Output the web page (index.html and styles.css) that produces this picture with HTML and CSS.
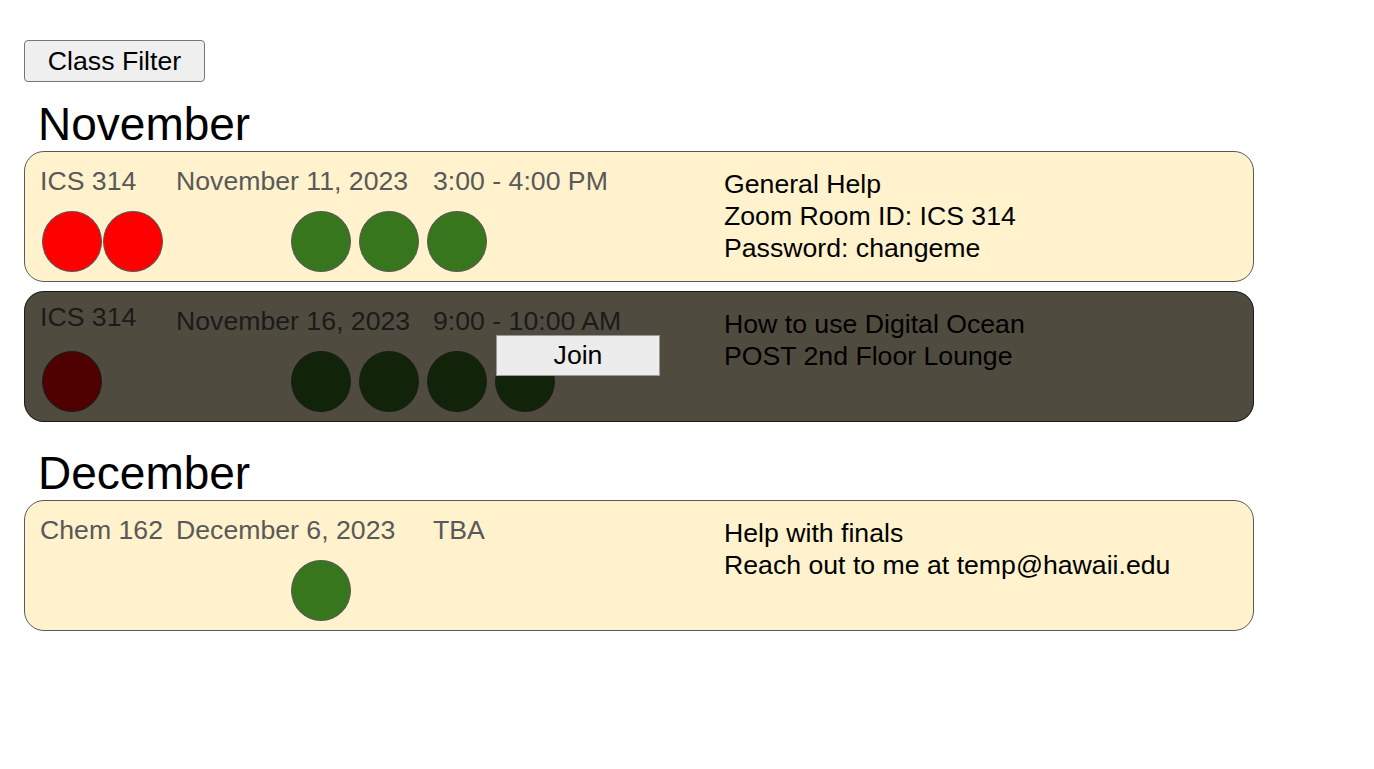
FILE: index.html
```html
<!DOCTYPE html>
<html lang="en">

<head>
    <meta charset="UTF-8">
    <meta name="viewport" content="width=device-width, initial-scale=1.0">
    <title>Office Hours</title>
    <link rel="stylesheet" href="styles.css">
</head>

<body>
    <div id="page">
        <button class="filter">Class Filter</button>

        <h2 class="month">November</h2>
        <div class="slot">
            <div class="main">
                <div class="meta">
                    <span class="course">ICS 314</span>
                    <span>November 11, 2023</span>
                    <span>3:00 - 4:00 PM</span>
                </div>
                <div class="people">
                    <div class="group away">
                        <i class="dot red"></i><i class="dot red"></i>
                    </div>
                    <div class="group here">
                        <i class="dot green"></i><i class="dot green"></i><i class="dot green"></i>
                    </div>
                </div>
            </div>
            <div class="info">
                General Help<br>
                Zoom Room ID: ICS 314<br>
                Password: changeme
            </div>
        </div>

        <div class="slot dim">
            <div class="main">
                <div class="meta">
                    <span class="course">ICS 314</span>
                    <span>November 16, 2023</span>
                    <span>9:00 - 10:00 AM</span>
                </div>
                <div class="people">
                    <div class="group away">
                        <i class="dot red"></i>
                    </div>
                    <div class="group here">
                        <i class="dot green"></i><i class="dot green"></i><i class="dot green"></i><i class="dot green"></i>
                    </div>
                </div>
            </div>
            <div class="info">
                How to use Digital Ocean<br>
                POST 2nd Floor Lounge
            </div>
            <button class="join">Join</button>
        </div>

        <h2 class="month">December</h2>
        <div class="slot">
            <div class="main">
                <div class="meta">
                    <span class="course">Chem 162</span>
                    <span>December 6, 2023</span>
                    <span>TBA</span>
                </div>
                <div class="people">
                    <div class="group away"></div>
                    <div class="group here">
                        <i class="dot green"></i>
                    </div>
                </div>
            </div>
            <div class="info">
                Help with finals<br>
                Reach out to me at temp@hawaii.edu
            </div>
        </div>
    </div>
</body>

</html>
```

FILE: styles.css
```css
* {
    margin: 0;
    padding: 0;
    box-sizing: border-box;
}

body {
    background: #fff;
    font-family: "Liberation Sans", Arial, sans-serif;
    font-size: 20pt;
    color: #000;
}

#page {
    width: 1254px;
    padding: 40px 0 0 24px;
    display: flex;
    flex-direction: column;
    align-items: flex-start;
}

.filter {
    width: 181px;
    height: 42px;
    font-family: inherit;
    font-size: 20pt;
    color: #000;
    background-color: #efefef;
    border: 1px solid #767676;
    border-radius: 4px;
}

.month {
    font-weight: normal;
    font-size: 46px;
    line-height: 52px;
    padding-left: 14px;
    margin-top: 16px;
    margin-bottom: 1px;
}

.month:nth-of-type(2) {
    margin-top: 25px;
    margin-bottom: 1px;
}

.slot {
    position: relative;
    width: 1230px;
    height: 131px;
    display: flex;
    padding-left: 15px;
    background-color: #fff2cc;
    border: 1px solid #595959;
    border-radius: 20px;
}

.slot + .slot {
    margin-top: 9px;
}

.main {
    width: 684px;
    display: flex;
    flex-direction: column;
}

.meta {
    display: grid;
    grid-template-columns: 136px 257px auto;
    line-height: 30px;
    padding-top: 14px;
    color: #595959;
    white-space: nowrap;
}

.people {
    display: flex;
    margin-top: 15px;
    padding-left: 2px;
}

.group {
    display: flex;
}

.away {
    width: 249px;
    gap: 1px;
}

.here {
    gap: 8px;
}

.dot {
    display: block;
    width: 60px;
    height: 61px;
    border: 1px solid #595959;
    border-radius: 50%;
}

.red {
    background-color: #f00;
}

.green {
    background-color: #38761d;
}

.info {
    padding-top: 16px;
    line-height: 32px;
    white-space: nowrap;
}

/* hovered slot: darkened with a join button on top */
.dim::after {
    content: "";
    position: absolute;
    top: -1px;
    left: -1px;
    right: -1px;
    bottom: -1px;
    border-radius: 20px;
    background-color: rgba(0, 0, 0, 0.69);
}

.dim .course {
    margin-top: -4px;
}

.join {
    position: absolute;
    z-index: 1;
    left: 471px;
    top: 43px;
    width: 164px;
    height: 41px;
    font-family: inherit;
    font-size: 20pt;
    color: #000;
    background-color: #ececec;
    border: 1px solid #9a9a9a;
}
```
